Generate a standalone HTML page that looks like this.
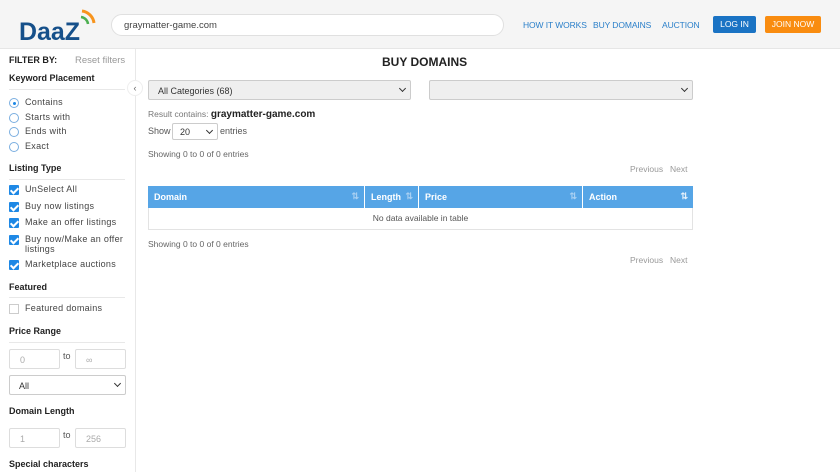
<!DOCTYPE html>
<html><head><meta charset="utf-8"><style>
*{box-sizing:border-box;margin:0;padding:0}
body{width:840px;height:472px;overflow:hidden;background:#fff;font-family:"Liberation Sans",sans-serif;color:#333;position:relative}
.a{position:absolute;white-space:nowrap}
.hdr{position:absolute;left:0;top:0;width:840px;height:49px;background:#f5f5f5;border-bottom:1px solid #e6e6e6}
.nav{font-size:8.5px;color:#2a7fc9;top:20px;letter-spacing:-.1px}
.side{position:absolute;left:0;top:49px;width:136px;height:423px;border-right:1px solid #e8e8e8}
.h{font-size:9px;font-weight:bold;color:#222}
.ln{position:absolute;left:9px;width:116px;height:1px;background:#e8e8e8}
.rad{position:absolute;left:9px;width:10px;height:10px;border:1px solid #7aaee0;border-radius:50%;background:#fff}
.cb{position:absolute;left:9px;width:10px;height:10px;background:#1e88e5;border-radius:1px}
.cb:after{content:"";position:absolute;left:3px;top:1px;width:3px;height:6px;border:solid #fff;border-width:0 2px 2px 0;transform:rotate(45deg)}
.lbl{font-size:9px;color:#444;left:25px;letter-spacing:.3px}
.inp{position:absolute;height:20px;border:1px solid #ddd;border-radius:2px;font-size:9px;color:#aaa;padding:5px 10px}
.sel{position:absolute;height:20px;border:1px solid #ccc;border-radius:2px;background:#efefef;font-size:9px;padding:5px 9px;color:#333}
.chev{position:absolute;right:5px;top:5px;width:5px;height:5px;border:solid #333;border-width:0 1.5px 1.5px 0;transform:rotate(45deg)}
.sm{font-size:8.5px;color:#666}
.th{position:absolute;top:186px;height:22px;background:#56a5e6;color:#fff;font-size:9px;font-weight:bold;padding:6px 6px;border-right:1px solid #fff}
.srt{position:absolute;right:5px;top:5px;color:#a9d0f2;font-size:9px}
</style></head><body>
<div class="hdr"></div>
<svg class="a" style="left:18px;top:6px" width="80" height="38">
<path d="M64 5 A14 14 0 0 1 76 17" stroke="#f7941d" stroke-width="3" fill="none"/>
<path d="M63 11 A8 8 0 0 1 70 18" stroke="#4caf50" stroke-width="2.5" fill="none"/>
<text x="1" y="34" font-family="Liberation Sans" font-weight="bold" font-size="25" fill="#16508a" textLength="61" lengthAdjust="spacingAndGlyphs">DaaZ</text>
</svg>
<div class="a" style="left:111px;top:14px;width:393px;height:22px;background:#fff;border:1px solid #e0e0e0;border-radius:11px;font-size:9.5px;color:#444;padding:5px 12px">graymatter-game.com</div>
<div class="a nav" style="left:523px">HOW IT WORKS</div>
<div class="a nav" style="left:593px">BUY DOMAINS</div>
<div class="a nav" style="left:662px">AUCTION</div>
<div class="a" style="left:713px;top:16px;width:43px;height:17px;background:#1a73c4;border-radius:2px;color:#fff;font-size:8.5px;text-align:center;line-height:17px">LOG IN</div>
<div class="a" style="left:765px;top:16px;width:56px;height:17px;background:#f98c10;border-radius:2px;color:#fff;font-size:8.5px;text-align:center;line-height:17px">JOIN NOW</div>

<div class="side"></div>
<div class="a h" style="left:9px;top:55px">FILTER BY:</div>
<div class="a" style="left:75px;top:55px;font-size:9.5px;color:#999">Reset filters</div>
<div class="a h" style="left:9px;top:73px">Keyword Placement</div>
<div class="ln" style="top:89px"></div>
<div class="a" style="left:127px;top:80px;width:16px;height:16px;border-radius:50%;background:#fff;border:1px solid #eee;font-size:9px;color:#666;text-align:center;line-height:14px">‹</div>
<div class="rad" style="top:98px"><div style="position:absolute;left:2.5px;top:2.5px;width:3px;height:3px;border-radius:50%;background:#1e88e5"></div></div>
<div class="a lbl" style="top:97px">Contains</div>
<div class="rad" style="top:113px"></div><div class="a lbl" style="top:112px">Starts with</div>
<div class="rad" style="top:127px"></div><div class="a lbl" style="top:126px">Ends with</div>
<div class="rad" style="top:142px"></div><div class="a lbl" style="top:141px">Exact</div>
<div class="a h" style="left:9px;top:163px">Listing Type</div>
<div class="ln" style="top:179px"></div>
<div class="cb" style="top:185px"></div><div class="a lbl" style="top:184px">UnSelect All</div>
<div class="cb" style="top:202px"></div><div class="a lbl" style="top:201px">Buy now listings</div>
<div class="cb" style="top:218px"></div><div class="a lbl" style="top:217px">Make an offer listings</div>
<div class="cb" style="top:235px"></div><div class="a lbl" style="top:234px;line-height:10px">Buy now/Make an offer<br>listings</div>
<div class="cb" style="top:260px"></div><div class="a lbl" style="top:259px">Marketplace auctions</div>
<div class="a h" style="left:9px;top:282px">Featured</div>
<div class="ln" style="top:297px"></div>
<div style="position:absolute;left:9px;top:304px;width:10px;height:10px;border:1px solid #ccc"></div><div class="a lbl" style="top:303px">Featured domains</div>
<div class="a h" style="left:9px;top:326px">Price Range</div>
<div class="ln" style="top:342px"></div>
<div class="inp" style="left:9px;top:349px;width:51px">0</div>
<div class="a" style="left:63px;top:351px;font-size:9px;color:#555">to</div>
<div class="inp" style="left:75px;top:349px;width:51px">∞</div>
<div class="sel" style="left:9px;top:375px;width:117px;background:#fff;height:20px">All<div class="chev"></div></div>
<div class="a h" style="left:9px;top:406px">Domain Length</div>
<div class="inp" style="left:9px;top:428px;width:51px">1</div>
<div class="a" style="left:63px;top:430px;font-size:9px;color:#555">to</div>
<div class="inp" style="left:75px;top:428px;width:51px">256</div>
<div class="a h" style="left:9px;top:459px">Special characters</div>

<div class="a" style="left:382px;top:55px;font-size:12px;font-weight:bold;color:#222">BUY DOMAINS</div>
<div class="sel" style="left:148px;top:80px;width:263px">All Categories (68)<div class="chev"></div></div>
<div class="sel" style="left:429px;top:80px;width:264px"><div class="chev"></div></div>
<div class="a" style="left:148px;top:109px;font-size:8.5px;color:#777">Result contains: <b style="font-size:10px;color:#222">graymatter-game.com</b></div>
<div class="a" style="left:148px;top:126px;font-size:9px;color:#555">Show</div>
<div class="sel" style="left:172px;top:123px;width:46px;height:17px;background:#fff;padding:3px 7px">20<div class="chev" style="top:4px"></div></div>
<div class="a" style="left:220px;top:126px;font-size:9px;color:#555">entries</div>
<div class="a sm" style="left:148px;top:149px">Showing 0 to 0 of 0 entries</div>
<div class="a sm" style="left:630px;top:164px;color:#999">Previous</div>
<div class="a sm" style="left:670px;top:164px;color:#999">Next</div>
<div class="th" style="left:148px;width:217px">Domain<span class="srt">⇅</span></div>
<div class="th" style="left:365px;width:54px">Length<span class="srt">⇅</span></div>
<div class="th" style="left:419px;width:164px">Price<span class="srt">⇅</span></div>
<div class="th" style="left:583px;width:110px;border-right:0">Action<span class="srt" style="color:#e8f2fb">⇅</span></div>
<div class="a" style="left:148px;top:208px;width:545px;height:22px;border:1px solid #e3e3e3;border-top:0;font-size:8.5px;color:#555;text-align:center;line-height:21px">No data available in table</div>
<div class="a sm" style="left:148px;top:239px">Showing 0 to 0 of 0 entries</div>
<div class="a sm" style="left:630px;top:255px;color:#999">Previous</div>
<div class="a sm" style="left:670px;top:255px;color:#999">Next</div>
</body></html>
